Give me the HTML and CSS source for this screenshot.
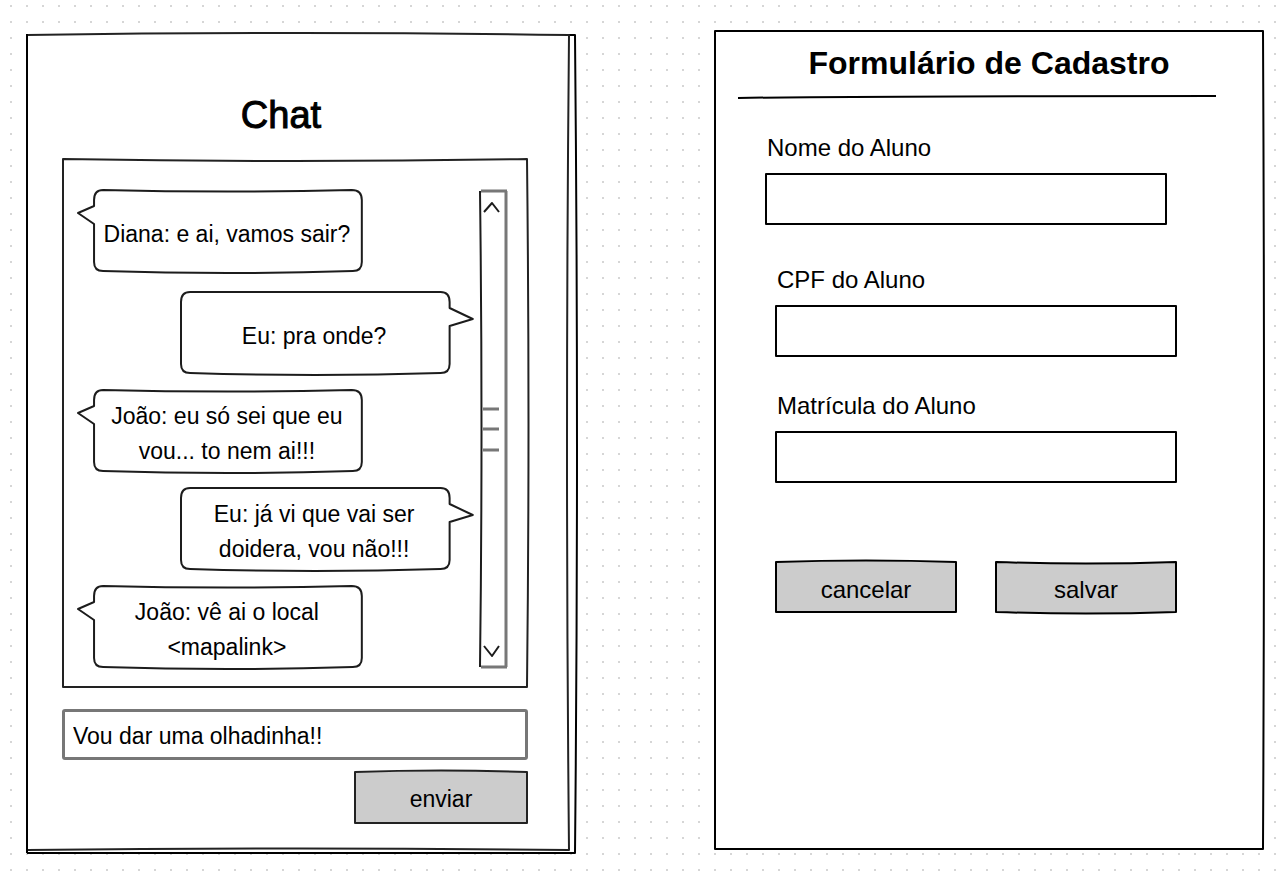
FILE: index.html
```html
<!DOCTYPE html>
<html lang="pt-BR">
<head>
<meta charset="utf-8">
<meta name="viewport" content="width=device-width, initial-scale=1">
<title>Chat e Formulário de Cadastro</title>
<link rel="stylesheet" href="styles.css">
</head>
<body>
<main class="board">
  <section class="panel chat">
    <svg class="frame" viewBox="0 0 550 820" preserveAspectRatio="none" aria-hidden="true">
      <path class="paper" d="M1 1 Q275 -3 549 1 Q553 410 549 819 H1 Z"/>
      <path class="ink" d="M543 1 H549 Q553 410 549 819 H1"/>
      <path class="pencil" d="M1 1 Q275 -3 543 1 Q539 410 543 816 Q275 813 1 816"/>
      <path class="ink" d="M1 0 V819"/>
    </svg>
    <h1 class="chat-title">Chat</h1>
    <div class="window">
      <svg class="frame" viewBox="0 0 466 530" preserveAspectRatio="none" aria-hidden="true">
        <path class="pencil" d="M1 1 Q233 5 465 1 Q468 265 465 529 H1 Z"/>
      </svg>
      <div class="thread">
        <div class="bubble theirs first">
          <svg class="frame" viewBox="0 0 285 84" preserveAspectRatio="none" aria-hidden="true">
            <path class="thin" d="M26 1 Q150 4 274 1 Q284 1 284 11 V73 Q284 82 275 82 Q150 86 26 82 Q17 82 17 73 V35 L1 24 L17 17 V11 Q17 1 26 1 Z"/>
          </svg>
          <p class="message">Diana: e ai, vamos sair?</p>
        </div>
        <div class="bubble mine">
          <svg class="frame" viewBox="0 0 292 84" preserveAspectRatio="none" aria-hidden="true">
            <path class="thin" d="M10 1 H259 Q268 1 268 11 V17 L291 28 L268 35 V73 Q268 82 259 82 Q134 86 10 82 Q1 82 1 73 V11 Q1 1 10 1 Z"/>
          </svg>
          <p class="message">Eu: pra onde?</p>
        </div>
        <div class="bubble theirs">
          <svg class="frame" viewBox="0 0 285 84" preserveAspectRatio="none" aria-hidden="true">
            <path class="thin" d="M26 1 Q150 4 274 1 Q284 1 284 11 V73 Q284 82 275 82 Q150 86 26 82 Q17 82 17 73 V35 L1 24 L17 17 V11 Q17 1 26 1 Z"/>
          </svg>
          <p class="message">João: eu só sei que eu<br>vou... to nem ai!!!</p>
        </div>
        <div class="bubble mine">
          <svg class="frame" viewBox="0 0 292 84" preserveAspectRatio="none" aria-hidden="true">
            <path class="thin" d="M10 1 H259 Q268 1 268 11 V17 L291 28 L268 35 V73 Q268 82 259 82 Q134 86 10 82 Q1 82 1 73 V11 Q1 1 10 1 Z"/>
          </svg>
          <p class="message">Eu: já vi que vai ser<br>doidera, vou não!!!</p>
        </div>
        <div class="bubble theirs">
          <svg class="frame" viewBox="0 0 285 84" preserveAspectRatio="none" aria-hidden="true">
            <path class="thin" d="M26 1 Q150 4 274 1 Q284 1 284 11 V73 Q284 82 275 82 Q150 86 26 82 Q17 82 17 73 V35 L1 24 L17 17 V11 Q17 1 26 1 Z"/>
          </svg>
          <p class="message">João: vê ai o local<br>&lt;mapalink&gt;</p>
        </div>
      </div>
      <div class="scrollbar">
        <svg class="frame" viewBox="0 0 29 482" preserveAspectRatio="none" aria-hidden="true">
          <path class="soft" d="M27 2 V480 M2 2 H28 M2 480 H28"/>
          <path class="thin" d="M1 2 Q4 241 1 480"/>
        </svg>
        <button class="arrow" type="button" aria-label="Rolar para cima">
          <svg width="18" height="12" viewBox="0 0 18 12"><path class="thin" d="M1 11 L9 2 L16 11"/></svg>
        </button>
        <svg class="grip" width="16" height="45" viewBox="0 0 16 45" aria-hidden="true"><path class="soft" d="M0 2 H16 M0 22 H16 M0 43 H16"/></svg>
        <button class="arrow" type="button" aria-label="Rolar para baixo">
          <svg width="18" height="12" viewBox="0 0 18 12"><path class="thin" d="M1 1 L9 11 L16 1"/></svg>
        </button>
      </div>
    </div>
    <form class="composer">
      <input class="chat-input" type="text" value="Vou dar uma olhadinha!!" aria-label="Mensagem">
      <button class="button send" type="button">
        <svg class="frame" viewBox="0 0 174 54" preserveAspectRatio="none" aria-hidden="true">
          <path class="fill pencil" d="M1 2 Q87 -1 173 2 V53 H1 Z"/>
        </svg>
        <span class="button-text">enviar</span>
      </button>
    </form>
  </section>

  <section class="panel signup">
    <svg class="frame" viewBox="0 0 550 820" preserveAspectRatio="none" aria-hidden="true">
      <path class="paper" d="M1 1 H549 Q551 410 549 819 H1 Z"/>
      <path class="ink" d="M1 1 H549 Q551 410 549 819 H1 Z"/>
    </svg>
    <h2 class="form-title">Formulário de Cadastro</h2>
    <svg class="rule" viewBox="0 0 478 4" preserveAspectRatio="none" aria-hidden="true">
      <path class="ink" d="M0 3 Q120 1 478 1"/>
    </svg>
    <form class="fields">
      <div class="field outdented">
        <label class="label" for="nome">Nome do Aluno</label>
        <input class="text-input" id="nome" type="text">
      </div>
      <div class="field spaced">
        <label class="label" for="cpf">CPF do Aluno</label>
        <input class="text-input" id="cpf" type="text">
      </div>
      <div class="field">
        <label class="label" for="matricula">Matrícula do Aluno</label>
        <input class="text-input" id="matricula" type="text">
      </div>
      <div class="actions">
        <button class="button" type="button">
          <svg class="frame" viewBox="0 0 182 52" preserveAspectRatio="none" aria-hidden="true">
            <path class="fill ink" d="M1 1 Q91 -2 181 1 V51 H1 Z"/>
          </svg>
          <span class="button-text">cancelar</span>
        </button>
        <button class="button" type="button">
          <svg class="frame" viewBox="0 0 182 52" preserveAspectRatio="none" aria-hidden="true">
            <path class="fill ink" d="M1 1 Q91 4 181 1 V51 Q91 54 1 51 Z"/>
          </svg>
          <span class="button-text">salvar</span>
        </button>
      </div>
    </form>
  </section>
</main>
</body>
</html>
```

FILE: styles.css
```css
* {
  box-sizing: border-box;
}

body {
  margin: 0;
  color: #000;
  background-color: #fff;
  background-image: conic-gradient(from 270deg at 2px 2px, #d6d6d6 90deg, transparent 90deg);
  background-size: 16px 16px;
  background-position: 10px 5px;
  font-family: "Liberation Sans", Arial, sans-serif;
  font-size: 23px;
}

button,
input {
  font: inherit;
  color: inherit;
}

.board {
  display: grid;
  grid-template-columns: minmax(0, 1fr) minmax(0, 1fr);
  align-items: start;
  gap: 138px;
  padding: 30px 18px 22px 26px;
}

.panel {
  position: relative;
  isolation: isolate;
}

.frame {
  position: absolute;
  inset: 0;
  width: 100%;
  height: 100%;
  overflow: visible;
  z-index: -1;
}

.frame path,
.rule path {
  vector-effect: non-scaling-stroke;
}

.paper {
  fill: #fff;
}

.ink,
.pencil,
.thin,
.soft {
  fill: none;
  stroke: #000;
  stroke-width: 2;
  stroke-linejoin: round;
}

.pencil {
  stroke: #222;
}

.thin {
  stroke: #1c1c1c;
}

.soft {
  stroke: #777;
  stroke-width: 3;
}

.fill {
  fill: #ccc;
}

/* Chat */

.chat {
  margin-top: 4px;
  padding: 57px 48px 30px 36px;
}

.chat-title {
  margin: 0 28px 19px 0;
  font-size: 38px;
  font-weight: 400;
  line-height: 48px;
  text-align: center;
  -webkit-text-stroke: 1px #000;
}

.window {
  position: relative;
  display: flex;
  gap: 5px;
  padding: 31px 20px 19px 15px;
}

.thread {
  flex: 1;
  display: flex;
  flex-direction: column;
  gap: 14px;
}

.bubble {
  position: relative;
  display: flex;
  align-items: center;
  justify-content: center;
  min-height: 84px;
  padding-top: 6px;
}

.theirs {
  align-self: flex-start;
  width: 72%;
  padding-left: 14px;
}

.mine {
  align-self: flex-end;
  width: 74%;
  padding-right: 26px;
}

.first {
  margin-bottom: 4px;
}

.message {
  margin: 0;
  line-height: 35px;
  text-align: center;
}

.scrollbar {
  position: relative;
  display: flex;
  flex-direction: column;
  justify-content: space-between;
  align-items: flex-start;
  width: 29px;
  padding: 12px 4px;
}

.arrow {
  display: block;
  height: 12px;
  padding: 0;
  border: 0;
  background: none;
  line-height: 0;
}

.composer {
  display: flex;
  flex-direction: column;
  gap: 10px;
  margin-top: 21px;
}

.chat-input {
  width: 100%;
  height: 51px;
  padding: 4px 8px 0;
  border: 3px solid #777;
  border-radius: 3px;
  background: #fff;
}

.button {
  position: relative;
  isolation: isolate;
  flex: 1;
  height: 52px;
  padding: 5px 0 0;
  border: 0;
  background: none;
}

.send {
  flex: none;
  align-self: flex-end;
  width: 174px;
  height: 54px;
}

/* Formulário */

.signup {
  padding: 13px 0 237px;
}

.form-title {
  margin: 0;
  font-size: 32px;
  font-weight: 700;
  line-height: 40px;
  text-align: center;
}

.rule {
  display: block;
  width: calc(100% - 72px);
  height: 4px;
  margin: 12px 48px 0 24px;
  overflow: visible;
}

.fields {
  display: flex;
  flex-direction: column;
  gap: 32px;
  padding: 32px 87px 0 61px;
  font-size: 24px;
}

.field {
  display: flex;
  flex-direction: column;
  gap: 8px;
}

.outdented {
  margin: 0 10px 0 -10px;
}

.spaced {
  margin-top: 6px;
}

.label {
  padding-left: 2px;
  line-height: 34px;
}

.text-input {
  width: 100%;
  height: 52px;
  padding: 0 8px;
  border: 2px solid #000;
  border-radius: 1px;
  background: #fff;
}

.actions {
  display: flex;
  gap: 38px;
  margin-top: 46px;
}
```
